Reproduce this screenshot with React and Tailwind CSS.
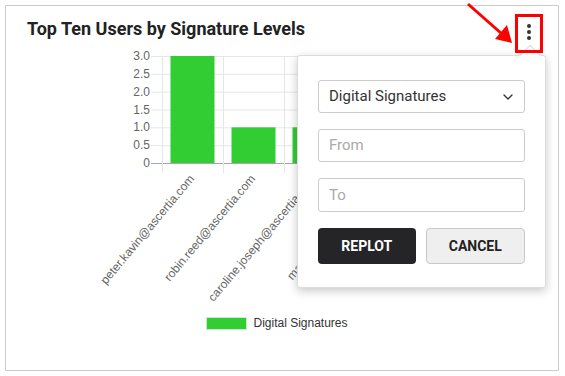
import { ChevronDown } from 'lucide-react';

const USERS = [
  { email: 'peter.kavin@ascertia.com', count: 3 },
  { email: 'robin.reed@ascertia.com', count: 1 },
  { email: 'caroline.joseph@ascertia.com', count: 1 },
  { email: 'martin.lee@ascertia.com', count: 1 },
  { email: 'sarah.jones@ascertia.com', count: 1 },
  { email: 'david.clark@ascertia.com', count: 1 },
];

const TICKS = [3, 2.5, 2, 1.5, 1, 0.5, 0];

// chart geometry (svg coords)
const AXIS_X = 156;
const ZERO_Y = 117;
const TOP_Y = 10;
const COL_W = 61;
const yOf = (v) => ZERO_Y - (v / 3) * (ZERO_Y - TOP_Y);

function SignatureChart() {
  return (
    <svg width="552" height="269" className="block shrink-0" style={{ fontFamily: '"Liberation Sans", Arial, sans-serif' }}>
      {/* horizontal grid */}
      {TICKS.map((t) => (
        <g key={t}>
          <line
            x1={145}
            x2={540}
            y1={yOf(t) + 0.5}
            y2={yOf(t) + 0.5}
            stroke={t === 0 ? '#a6a6a6' : '#e6e6e6'}
            strokeWidth="1"
          />
          <text x={144} y={yOf(t)} dy="4" textAnchor="end" fontSize="12" fill="#666">
            {t === 0 ? '0' : t.toFixed(1)}
          </text>
        </g>
      ))}
      {/* vertical grid */}
      {[0, 1, 2, 3, 4, 5, 6].map((i) => (
        <line
          key={i}
          x1={AXIS_X + i * COL_W + 0.5}
          x2={AXIS_X + i * COL_W + 0.5}
          y1={TOP_Y}
          y2={127}
          stroke="#e6e6e6"
          strokeWidth="1"
        />
      ))}
      {/* bars */}
      {USERS.map((u, i) => {
        const cx = AXIS_X + i * COL_W + COL_W / 2;
        return (
          <rect key={u.email} x={cx - 22} y={yOf(u.count)} width="44" height={ZERO_Y - yOf(u.count)} fill="#32cd32" />
        );
      })}
      {/* rotated labels */}
      {USERS.map((u, i) => {
        const cx = AXIS_X + i * COL_W + COL_W / 2;
        return (
          <text
            key={u.email}
            transform={`translate(${cx} 131) rotate(-50)`}
            textAnchor="end"
            dominantBaseline="middle"
            fontSize="12"
            fill="#666"
          >
            {u.email}
          </text>
        );
      })}
    </svg>
  );
}

function ReplotPopup() {
  return (
    <div className="absolute left-[291px] top-[49px] w-[249px] h-[233px] bg-white border border-[#dcdcdc] rounded-[3px] shadow-[0_3px_10px_rgba(0,0,0,0.22)] px-[20px] pt-[24px]">
      {/* caret */}
      <div className="absolute left-[224px] -top-[8px] w-[16px] h-[16px] rotate-45 bg-white border-t border-l border-[#dcdcdc]" />
      <div className="relative flex flex-col gap-4">
        <div className="flex items-center h-[33px] border border-[#ccc] rounded-[3px] pl-[10px] pr-[8px] text-[15px] text-[#333]">
          <span>Digital Signatures</span>
          <ChevronDown size={16} strokeWidth={2} className="ml-auto text-[#333]" />
        </div>
        <div className="flex items-center h-[33px] border border-[#ccc] rounded-[3px] px-[10px] text-[15px] text-[#aaa]">From</div>
        <div className="flex items-center h-[34px] border border-[#ccc] rounded-[3px] px-[10px] text-[15px] text-[#aaa]">To</div>
        <div className="flex gap-[10px]">
          <button className="flex-1 h-9 rounded-[4px] bg-[#252427] text-white text-[14px] font-bold">REPLOT</button>
          <button className="flex-1 h-9 rounded-[4px] bg-[#efefef] border border-[#c8c8c8] text-[#222] text-[14px] font-bold">
            CANCEL
          </button>
        </div>
      </div>
    </div>
  );
}

export default function App() {
  return (
    <div className="relative w-[565px] h-[376px] bg-white pt-[5px] pl-[5px]" style={{ fontFamily: 'Roboto, "Liberation Sans", sans-serif' }}>
      <div className="relative w-[554px] h-[366px] border border-[#ccc] flex flex-col">
        <div className="flex h-10 shrink-0">
          <h2 className="mt-[11px] ml-[21px] text-[18px] leading-6 font-bold text-[#222]">Top Ten Users by Signature Levels</h2>
          <button className="relative z-30 ml-auto mr-[15px] mt-[8px] w-[28px] h-[39px] border-[3px] border-[#f00] flex flex-col items-center justify-center gap-[2px] pb-[4px]">
            <span className="w-[4px] h-[4px] rounded-full bg-[#333]" />
            <span className="w-[4px] h-[4px] rounded-full bg-[#333]" />
            <span className="w-[4px] h-[4px] rounded-full bg-[#333]" />
          </button>
        </div>

        <SignatureChart />

        {/* legend */}
        <div className="flex h-4 items-center justify-center pr-[10px] gap-[6px]">
          <span className="w-[41px] h-[13px] bg-[#32cd32] border border-[#c9ecc9]" />
          <span className="text-[12px] text-[#333]" style={{ fontFamily: '"Liberation Sans", Arial, sans-serif' }}>
            Digital Signatures
          </span>
        </div>

        <ReplotPopup />
      </div>

      {/* annotation arrow */}
      <svg className="absolute left-0 top-0 pointer-events-none z-40" width="565" height="60">
        <line x1="468" y1="4" x2="502" y2="34" stroke="#f00" strokeWidth="3" />
        <polygon points="512,43 495,39 507,25" fill="#f00" />
      </svg>
    </div>
  );
}
